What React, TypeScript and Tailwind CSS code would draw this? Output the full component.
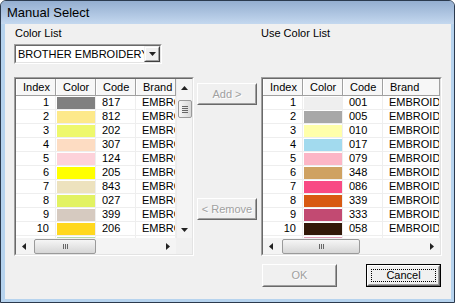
type Row = { idx: number; color: string; code: string }

const leftRows: Row[] = [
  { idx: 1, color: '#808080', code: '817' },
  { idx: 2, color: '#fde98a', code: '812' },
  { idx: 3, color: '#eef86c', code: '202' },
  { idx: 4, color: '#fddcc2', code: '307' },
  { idx: 5, color: '#fdd2da', code: '124' },
  { idx: 6, color: '#ffff00', code: '205' },
  { idx: 7, color: '#ede2be', code: '843' },
  { idx: 8, color: '#e2f262', code: '027' },
  { idx: 9, color: '#d6cac0', code: '399' },
  { idx: 10, color: '#ffd81e', code: '206' },
  { idx: 11, color: '#b9dcae', code: '513' },
]

const rightRows: Row[] = [
  { idx: 1, color: '#efefef', code: '001' },
  { idx: 2, color: '#a8a8a8', code: '005' },
  { idx: 3, color: '#ffffaa', code: '010' },
  { idx: 4, color: '#a2daee', code: '017' },
  { idx: 5, color: '#fcb6c6', code: '079' },
  { idx: 6, color: '#cfa262', code: '348' },
  { idx: 7, color: '#f84a84', code: '086' },
  { idx: 8, color: '#d85a12', code: '339' },
  { idx: 9, color: '#c24a72', code: '333' },
  { idx: 10, color: '#321808', code: '058' },
  { idx: 11, color: '#e4a0b8', code: '085' },
]

function Arrow({ dir }: { dir: 'up' | 'down' | 'left' | 'right' }) {
  if (dir === 'up')
    return (
      <svg width="7" height="4" viewBox="0 0 7 4">
        <polygon points="0,4 3.5,0 7,4" fill="#222" />
      </svg>
    )
  if (dir === 'down')
    return (
      <svg width="7" height="4" viewBox="0 0 7 4">
        <polygon points="0,0 7,0 3.5,4" fill="#222" />
      </svg>
    )
  if (dir === 'left')
    return (
      <svg width="4" height="7" viewBox="0 0 4 7">
        <polygon points="4,0 4,7 0,3.5" fill="#222" />
      </svg>
    )
  return (
    <svg width="4" height="7" viewBox="0 0 4 7">
      <polygon points="0,0 0,7 4,3.5" fill="#222" />
    </svg>
  )
}

function VScroll() {
  return (
    <div className="w-[16px] flex flex-col bg-[#f4f4f4] border-l border-l-[#ececec]">
      <div className="h-[17px] flex items-center justify-center">
        <Arrow dir="up" />
      </div>
      <div className="mt-[4px] ml-[1px] w-[14px] h-[18px] rounded-[2px] border border-[#9a9a9a] bg-gradient-to-r from-[#f6f6f6] to-[#d8d8d8] flex flex-col items-center justify-center gap-[1px]">
        <div className="w-[6px] h-px bg-[#666]" />
        <div className="w-[6px] h-px bg-[#666]" />
        <div className="w-[6px] h-px bg-[#666]" />
        <div className="w-[6px] h-px bg-[#666]" />
      </div>
      <div className="flex-1" />
      <div className="h-[17px] flex items-center justify-center">
        <Arrow dir="down" />
      </div>
    </div>
  )
}

function HScroll({ thumb }: { thumb: string }) {
  return (
    <div className="flex-1 h-[16px] flex items-center bg-[#f4f4f4]">
      <div className="w-[16px] h-full flex items-center justify-center">
        <Arrow dir="left" />
      </div>
      <div
        className={`${thumb} h-[15px] rounded-[2px] border border-[#9a9a9a] bg-gradient-to-b from-[#f6f6f6] to-[#d6d6d6] flex items-center justify-center gap-[1px]`}
      >
        <div className="w-px h-[5px] bg-[#666]" />
        <div className="w-px h-[5px] bg-[#666]" />
        <div className="w-px h-[5px] bg-[#666]" />
      </div>
      <div className="flex-1" />
      <div className="w-[16px] h-full flex items-center justify-center">
        <Arrow dir="right" />
      </div>
    </div>
  )
}

function ColorList({
  rows,
  boxW,
  brandW,
  thumb,
  vscroll,
}: {
  rows: Row[]
  boxW: string
  brandW: string
  thumb: string
  vscroll: boolean
}) {
  const head = 'h-[17px] flex items-center pl-[7px] bg-[#f7f7f7] border-r border-b border-[#a0a0a0] shadow-[inset_1px_0_0_#ffffff] shrink-0'
  const cell = 'h-[14px] border-r border-b border-[#eeeeee] leading-[13px] shrink-0'
  return (
    <div className={`${boxW} border border-t-[#a0a0a0] border-l-[#a0a0a0] border-b-white border-r-white`}>
      <div className="border border-t-[#696969] border-l-[#696969] border-b-[#e3e3e3] border-r-[#e3e3e3] bg-white">
        <div className="flex">
          <div className="flex-1 overflow-hidden">
            <div className="flex">
              <div className={`${head} w-[40px]`}>Index</div>
              <div className={`${head} w-[40px]`}>Color</div>
              <div className={`${head} w-[40px]`}>Code</div>
              <div className={`${head} ${brandW}`}>Brand</div>
            </div>
            <div className="h-[142px] overflow-hidden">
              {rows.map((r) => (
                <div key={r.idx} className="flex">
                  <div className={`${cell} w-[40px] text-right pr-[6px]`}>{r.idx}</div>
                  <div className={`${cell} w-[40px] pl-[1px] pt-[1px]`}>
                    <div className="h-[12px]" style={{ backgroundColor: r.color }} />
                  </div>
                  <div className={`${cell} w-[40px] pl-[6px]`}>{r.code}</div>
                  <div className={`${cell} ${brandW} pl-[6px] overflow-hidden whitespace-nowrap`}>EMBROIDERY</div>
                </div>
              ))}
            </div>
          </div>
          {vscroll && <VScroll />}
        </div>
        <div className="flex">
          <HScroll thumb={thumb} />
          {vscroll && <div className="w-[16px] h-[16px] bg-[#f0f0f0]" />}
        </div>
      </div>
    </div>
  )
}

function Button({
  label,
  disabled,
  isDefault,
  className,
}: {
  label: string
  disabled?: boolean
  isDefault?: boolean
  className: string
}) {
  const inner = (
    <div className="h-full border border-t-white border-l-white border-b-[#696969] border-r-[#696969]">
      <div className="h-full border border-t-[#f0f0f0] border-l-[#f0f0f0] border-b-[#a0a0a0] border-r-[#a0a0a0] flex items-center justify-center relative">
        {isDefault && <div className="absolute inset-[2px] border border-dotted border-black" />}
        <span className={disabled ? 'text-[#a0a0a0] [text-shadow:1px_1px_0_#ffffff]' : 'text-black'}>{label}</span>
      </div>
    </div>
  )
  if (isDefault) return <div className={`${className} border border-black bg-[#f0f0f0]`}>{inner}</div>
  return <div className={`${className} bg-[#f0f0f0]`}>{inner}</div>
}

export default function App() {
  return (
    <div className="w-[455px] h-[303px] bg-white font-['Liberation_Sans',Arial,sans-serif] text-[11px] text-black">
      <div className="w-full h-full flex flex-col rounded-t-[6px] border border-[#2b3a4e] bg-[#b6d3ee] overflow-hidden">
        <div className="h-[23px] shrink-0 flex items-center pl-[6px] text-[13px] bg-gradient-to-b from-[#94aed0] to-[#c4d8ef]">
          Manual Select
        </div>
        <div className="flex-1 ml-[4px] mr-[3px] mb-[3px] bg-[#f0f0f0] flex flex-col pl-[9px] pt-[3px]">
          <div className="flex">
            <div className="w-[180px] flex flex-col">
              <div className="h-[13px] leading-[13px] pl-[1px]">Color List</div>
              <div className="mt-[4px] h-[20px] w-[148px] border border-t-[#a0a0a0] border-l-[#a0a0a0] border-b-white border-r-white">
                <div className="h-full border border-t-[#696969] border-l-[#696969] border-b-[#e3e3e3] border-r-[#e3e3e3] bg-white flex items-center">
                  <div className="flex-1 overflow-hidden whitespace-nowrap pl-[2px] leading-[16px]">BROTHER EMBROIDERY</div>
                  <div className="w-[16px] h-[16px] bg-[#f0f0f0] border border-t-[#f0f0f0] border-l-[#f0f0f0] border-b-[#404040] border-r-[#404040]">
                    <div className="h-full border border-t-white border-l-white border-b-[#a0a0a0] border-r-[#a0a0a0] flex items-center justify-center">
                      <Arrow dir="down" />
                    </div>
                  </div>
                </div>
              </div>
              <div className="mt-[13px]">
                <ColorList rows={leftRows} boxW="w-[180px]" brandW="w-[40px]" thumb="ml-[2px] w-[62px]" vscroll />
              </div>
            </div>
            <div className="ml-[3px] w-[60px] flex flex-col">
              <Button label="Add >" disabled className="mt-[56px] h-[22px]" />
              <Button label="< Remove" disabled className="mt-[93px] h-[22px]" />
            </div>
            <div className="ml-[4px] w-[181px] flex flex-col">
              <div className="h-[13px] leading-[13px]">Use Color List</div>
              <div className="mt-[37px]">
                <ColorList rows={rightRows} boxW="w-[181px]" brandW="w-[57px]" thumb="ml-[3px] w-[78px]" vscroll={false} />
              </div>
            </div>
          </div>
          <div className="mt-[8px] flex justify-end pr-[10px] gap-[29px]">
            <Button label="OK" disabled className="w-[75px] h-[23px]" />
            <Button label="Cancel" isDefault className="w-[75px] h-[23px]" />
          </div>
        </div>
      </div>
    </div>
  )
}
